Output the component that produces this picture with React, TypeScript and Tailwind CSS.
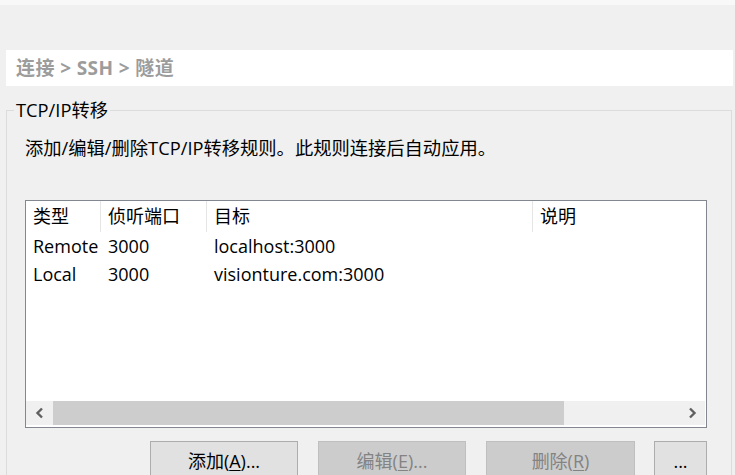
import React from "react";

const font = { fontFamily: '"Open Sans", "Noto Sans CJK SC", sans-serif' };

function Chevron({ dir }: { dir: "left" | "right" }) {
  return (
    <svg width="10" height="12" viewBox="0 0 10 12">
      {dir === "left" ? (
        <path d="M7 1.5 L2.5 6 L7 10.5" fill="none" stroke="#606060" strokeWidth="2.4" />
      ) : (
        <path d="M3 1.5 L7.5 6 L3 10.5" fill="none" stroke="#606060" strokeWidth="2.4" />
      )}
    </svg>
  );
}

export default function App() {
  const rows = [
    ["Remote", "3000", "localhost:3000", ""],
    ["Local", "3000", "visionture.com:3000", ""],
  ];
  const cols = ["w-[75px]", "w-[106px]", "w-[326px]", "flex-1"];
  return (
    <div
      className="w-[735px] h-[475px] bg-[#f0f0f0] overflow-hidden flex flex-col text-[#000]"
      style={font}
    >
      <div className="h-[5px] bg-[#f8f8f8] shrink-0" />
      <div className="mt-[45px] ml-[6px] w-[727px] h-[36px] bg-white flex items-center px-[10px] shrink-0">
        <span className="text-[19px] font-bold text-[#9c9c9c] tracking-[0.4px]">连接 &gt; SSH &gt; 隧道</span>
      </div>
      <div className="relative mt-[24px] ml-[6px] w-[726px] flex-1 border border-b-0 border-[#dcdcdc] flex flex-col">
        <div className="absolute left-[7px] top-[-13px] bg-[#f0f0f0] px-[2px] text-[18.3px] leading-[24px]">
          TCP/IP转移
        </div>
        <div className="mt-[25px] ml-[18px] text-[18.3px] leading-[24px] whitespace-nowrap">
          添加/编辑/删除TCP/IP转移规则。此规则连接后自动应用。
        </div>
        <div className="mt-[40px] ml-[18px] w-[682px] h-[228px] bg-white border border-[#828790] flex flex-col">
          <div className="h-[31px] flex text-[18px]">
            {["类型", "侦听端口", "目标", "说明"].map((h, i) => (
              <div
                key={h}
                className={`${cols[i]} h-[31px] flex items-center pl-[7px] ${i < 3 ? "border-r border-[#e5e5e5]" : ""}`}
              >
                {h}
              </div>
            ))}
          </div>
          {rows.map((r, ri) => (
            <div key={ri} className="h-[28px] flex items-center text-[18px]">
              {r.map((c, i) => (
                <div key={i} className={`${cols[i]} pl-[7px] ${i < 3 ? "pr-px" : ""} whitespace-nowrap`}>
                  {c}
                </div>
              ))}
            </div>
          ))}
          <div className="flex-1" />
          <div className="h-[24px] mr-px mb-[2px] bg-[#f0f0f0] flex items-center">
            <div className="w-[27px] h-full flex items-center justify-center">
              <Chevron dir="left" />
            </div>
            <div className="w-[511px] h-full bg-[#cdcdcd]" />
            <div className="flex-1" />
            <div className="w-[27px] h-full flex items-center justify-center">
              <Chevron dir="right" />
            </div>
          </div>
        </div>
        <div className="mt-[13px] ml-[143px] flex gap-[20px] text-[18px]">
          <div className="w-[148px] h-[40px] border border-[#adadad] bg-[#e1e1e1] flex items-center justify-center">
            添加(<span className="underline underline-offset-2">A</span>)...
          </div>
          <div className="w-[148px] h-[40px] border border-[#bfbfbf] bg-[#cccccc] text-[#838383] flex items-center justify-center">
            编辑(<span className="underline underline-offset-2">E</span>)...
          </div>
          <div className="w-[149px] h-[40px] border border-[#bfbfbf] bg-[#cccccc] text-[#838383] flex items-center justify-center">
            删除(<span className="underline underline-offset-2">R</span>)
          </div>
          <div className="w-[53px] h-[40px] -ml-px border border-[#adadad] bg-[#e1e1e1] flex items-center justify-center">
            ...
          </div>
        </div>
      </div>
    </div>
  );
}
